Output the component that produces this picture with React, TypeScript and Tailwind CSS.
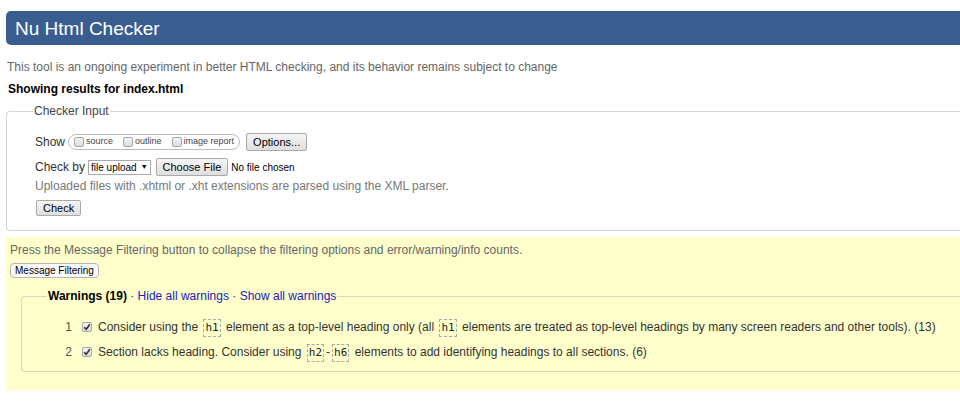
import * as React from "react"

const Box = ({ checked = false }: { checked?: boolean }) => (
  <span className="inline-flex h-[10px] w-[10px] items-center justify-center rounded-[2px] border border-[#a8a8a8] bg-gradient-to-b from-[#f4f4f4] to-[#dcdcdc] align-middle">
    {checked && (
      <svg width="8" height="8" viewBox="0 0 8 8">
        <path d="M1.2 4.2 L3.2 6.3 L6.9 1.2" fill="none" stroke="#333" strokeWidth="1.6" />
      </svg>
    )}
  </span>
)

const Code = ({ children }: { children: React.ReactNode }) => (
  <code className="mx-[2px] inline-block border border-dashed border-[#aaa] px-[1px] leading-[16px] font-['DejaVu_Sans_Mono',monospace] text-[11px] text-[#222]">
    {children}
  </code>
)

const SmallButton = ({ children, className = "" }: { children: React.ReactNode; className?: string }) => (
  <span
    className={`inline-flex items-center rounded-[2px] border border-[#a9a9a9] bg-gradient-to-b from-[#f6f6f6] to-[#dedede] px-[6px] text-[11px] leading-[15px] text-black ${className}`}
  >
    {children}
  </span>
)

export default function App() {
  return (
    <div className="h-[415px] w-[960px] overflow-hidden bg-white font-['Liberation_Sans',Arial,sans-serif] text-[12px] text-[#222]">
      <div className="w-[1000px] pl-[6px]">
        {/* Header */}
        <div className="mt-[11px] flex h-[34px] items-center rounded-l-[5px] bg-[#3a5d8f] pl-[9px]">
          <h1 className="text-[19px] leading-none text-white">Nu Html Checker</h1>
        </div>

        <p className="mt-[15px] pl-px text-[12px] leading-[14px] text-[#666]">
          This tool is an ongoing experiment in better HTML checking, and its behavior remains subject to change
        </p>
        <p className="mt-[8px] pl-[2px] text-[12px] font-bold leading-[14px] text-black">
          Showing results for index.html
        </p>

        {/* Checker input */}
        <fieldset className="mt-[8px] h-[127px] rounded-l-[4px] border border-r-0 border-[#d4d4d4] pl-[28px] pb-[8px]">
          <legend className="-ml-[2px] px-px text-[12px] leading-[14px] text-[#444]">Checker Input</legend>

          <div className="mt-[15px] flex items-center">
            <span className="mr-[3px] text-[12px] text-[#333]">Show</span>
            <span className="flex h-[16px] items-center gap-[7px] rounded-full border border-[#bdbdbd] px-[5px] text-[9px] text-[#444]">
              <span className="flex items-center gap-[2px]">
                <Box /> source
              </span>
              <span className="ml-[3px] flex items-center gap-[2px]">
                <Box /> outline
              </span>
              <span className="ml-[3px] flex items-center gap-[2px]">
                <Box /> image report
              </span>
            </span>
            <SmallButton className="ml-[6px] h-[18px] px-[5px]">Options...</SmallButton>
          </div>

          <div className="mt-[7px] flex items-center">
            <span className="mr-[3px] text-[12px] text-[#333]">Check by</span>
            <span className="flex h-[15px] items-center gap-[4px] border border-[#a9a9a9] bg-white px-[2px] text-[10px] text-black">
              file upload <span className="text-[7px]">▼</span>
            </span>
            <SmallButton className="ml-[5px] h-[18px]">Choose File</SmallButton>
            <span className="ml-[3px] text-[10px] text-black">No file chosen</span>
          </div>

          <p className="mt-[3px] text-[12px] leading-[14px] text-[#777]">
            Uploaded files with .xhtml or .xht extensions are parsed using the XML parser.
          </p>

          <SmallButton className="mt-[7px] ml-px h-[16px] px-[5px]">Check</SmallButton>
        </fieldset>

        {/* Message filtering */}
        <div className="mt-[6px] h-[153px] bg-[#ffffcc] pt-[6px] pl-[4px]">
          <p className="text-[12px] leading-[14px] text-[#666]">
            Press the Message Filtering button to collapse the filtering options and error/warning/info counts.
          </p>
          <span className="mt-[6px] inline-flex h-[15px] items-center rounded-[4px] border border-[#b5b5b5] bg-[#fafafa] px-[4px] text-[10px] text-black">
            Message Filtering
          </span>

          <fieldset className="mt-[10px] ml-[11px] h-[83px] rounded-l-[4px] border border-r-0 border-[#d8d8c8] pl-[26px]">
            <legend className="-ml-px px-px text-[12px] leading-[14px] text-[#333]">
              <b className="text-black">Warnings (19)</b> · <span className="text-[#2222bb]">Hide all warnings</span> ·{" "}
              <span className="text-[#2222bb]">Show all warnings</span>
            </legend>

            <div className="mt-[14px] flex items-center text-[12px] leading-[20px] text-[#333]">
              <span className="w-[24px] text-right text-[#555]">1</span>
              <span className="ml-[10px] mr-[6px] flex">
                <Box checked />
              </span>
              <span>
                Consider using the <Code>h1</Code> element as a top-level heading only (all <Code>h1</Code> elements are treated as top-level headings by many screen readers and other tools). (13)
              </span>
            </div>
            <div className="mt-[5px] flex items-center text-[12px] leading-[20px] text-[#333]">
              <span className="w-[24px] text-right text-[#555]">2</span>
              <span className="ml-[10px] mr-[6px] flex">
                <Box checked />
              </span>
              <span>
                Section lacks heading. Consider using <Code>h2</Code>-<Code>h6</Code> elements to add identifying headings to all sections. (6)
              </span>
            </div>
          </fieldset>
        </div>
      </div>
    </div>
  )
}
